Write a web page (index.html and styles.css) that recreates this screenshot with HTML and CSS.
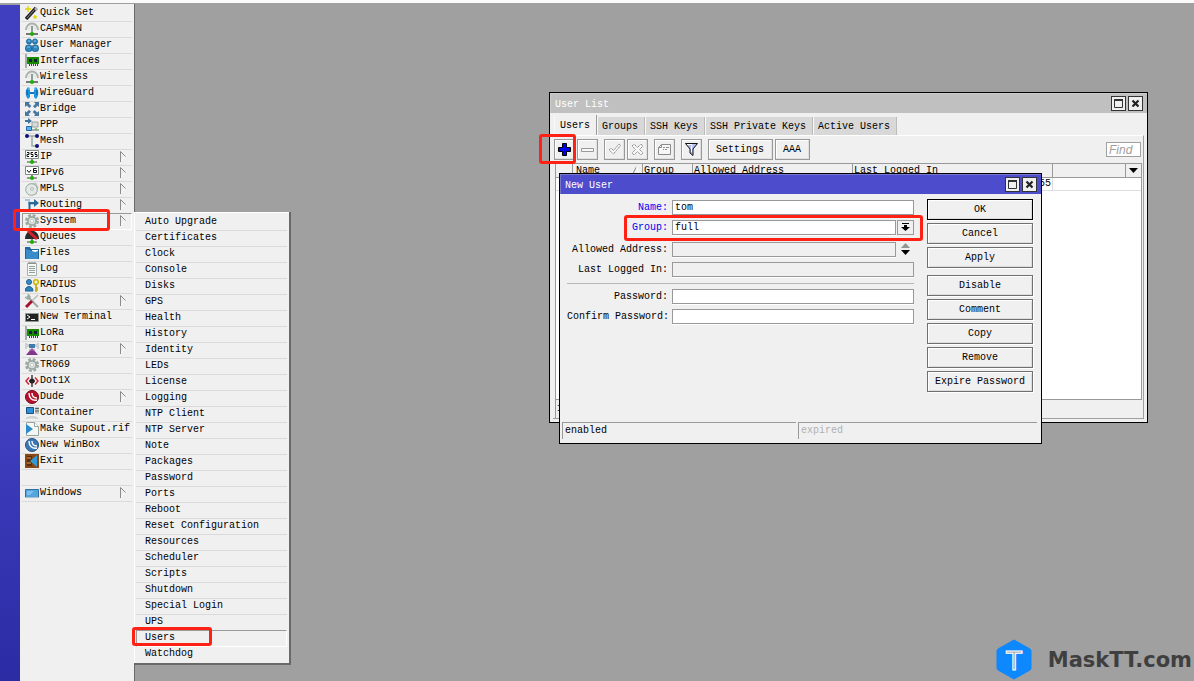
FILE: index.html
```html
<!DOCTYPE html>
<html lang="en">
<head>
<meta charset="utf-8">
<title>WinBox</title>
<link rel="stylesheet" href="styles.css">
</head>
<body>
<svg class="defs" aria-hidden="true">
  <symbol id="antenna" viewBox="0 0 14 14"><path d="M1 8a6 6.500 0 0 1 12 0" fill="none" stroke="#a9b4af" stroke-width="2"/><path d="M3.500 8a3.500 4 0 0 1 7 0" fill="none" stroke="#dde3e0"/><path d="M7 4v7" stroke="#8d9c95" stroke-width="2"/><path d="M1 12h12" stroke="#444" stroke-width="1.4"/><circle cx="7" cy="12" r="2" fill="#19b000"/></symbol>
  <symbol id="card" viewBox="0 0 14 14"><path d="M1 0v14" stroke="#a3b0aa" stroke-width="2"/><path d="M2 3h12v7H2z" fill="#178a00"/><path d="M4 5h3v3H4zM9 5h3v3H9z" fill="#123"/><path d="M4.500 10v2M6.500 10v2M8.500 10v2M10.500 10v2M12.500 10v2" stroke="#0c6500"/></symbol>
  <symbol id="gear" viewBox="0 0 14 14"><circle cx="7" cy="7" r="5.800" fill="none" stroke="#9aa7a2" stroke-width="2.400" stroke-dasharray="2.800 1.755"/><circle cx="7" cy="7" r="4.200" fill="#dfe5e2" stroke="#9aa7a2" stroke-width="1.800"/><circle cx="7" cy="7" r="1.900" fill="#f5f5f5" stroke="#c0c9c5"/></symbol>
  <symbol id="plug" viewBox="0 0 14 14"><path d="M.5.500h13v8H.500z" fill="#fff" stroke="#7d8c86"/><path d="M7 9v3M2 12h10" stroke="#444" stroke-width="1.2"/><circle cx="7" cy="12" r="2" fill="#19b000"/></symbol>
  <symbol id="arrow" viewBox="0 0 6 11"><path d="M5.500 5.500L.500 10.500" fill="none" stroke="#fff"/><path d="M.500 11V.500L5.500 5.500" fill="none" stroke="#8b8b8b"/></symbol>
  <symbol id="max" viewBox="0 0 15 15"><path d="M3.500 3.500h8v8h-8z" fill="none" stroke="#333"/><path d="M3 4h9" stroke="#333" stroke-width="2"/></symbol>
  <symbol id="close" viewBox="0 0 15 15"><path d="M4.500 4.500l6 6M10.500 4.500l-6 6" stroke="#222" stroke-width="2.200"/></symbol>
</svg>
<div class="topbar"></div>
<div class="app">
  <div class="rail"></div>
  <nav class="menu" aria-label="Main menu">
    <ul class="list">
      <li><a href="#"><svg class="ico" viewBox="0 0 14 14"><path d="M1 13L11 2" stroke="#222" stroke-width="3.500"/><path d="M9 3l2-2 2 2-2 2z" fill="#aaa"/><path d="M2 12l7-8" stroke="#888"/><path d="M3 0v6M0 3h6M10 9v4M8 11h4" stroke="#e3d400" stroke-width="1.400"/></svg>Quick Set</a></li>
      <li><a href="#"><svg class="ico"><use href="#antenna"/></svg>CAPsMAN</a></li>
      <li><a href="#"><svg class="ico" viewBox="0 0 14 14"><g fill="#2e86be" stroke="#1d5f8d" stroke-width=".8"><circle cx="4" cy="3.500" r="2.600"/><circle cx="10" cy="3.500" r="2.600"/><rect x=".5" y="7" width="6.500" height="6.500" rx="2.500"/><rect x="7" y="7" width="6.500" height="6.500" rx="2.500"/></g><path d="M2 9h3M9 9h3M3 3h2M9 3h2" stroke="#7fc3ea"/></svg>User Manager</a></li>
      <li><a href="#"><svg class="ico"><use href="#card"/></svg>Interfaces</a></li>
      <li><a href="#"><svg class="ico"><use href="#antenna"/></svg>Wireless</a></li>
      <li><a href="#"><svg class="ico" viewBox="0 0 14 14"><path d="M3 1C0 4 0 10 3 13l2-2V8h4v3l2 2c3-3 3-9 0-12L9 3v3H5V3z" fill="#1b93dd"/><path d="M2 4v5M12 4v5M5 7h4" stroke="#0b5ba0"/><path d="M4 1v3M10 1v3" stroke="#7dcaf5"/></svg>WireGuard</a></li>
      <li><a href="#"><svg class="ico" viewBox="0 0 14 14"><path d="M0 0h5L3.800 1.500l2.500 2.500-2 2-2.500-2.500L0 5zM14 0v5l-1.500-1.200-2.500 2.500-2-2 2.500-2.500L9 0zM0 14V9l1.500 1.200L4 7.700l2 2-2.500 2.500L5 14zM14 14H9l1.200-1.500-2.500-2.500 2-2 2.500 2.500L14 9z" fill="#47779f"/></svg>Bridge</a></li>
      <li><a href="#"><svg class="ico" viewBox="0 0 14 14"><path d="M0 2h3V0l4 3-4 3V4H0z" fill="#3f729b"/><path d="M7 4h6v5H7z" fill="#d7dcda" stroke="#9aa39f"/><path d="M7 11h7v2H7z" fill="#a7b0ac"/><path d="M1.500 8.500h5v4h-5z" fill="#56b2ed" stroke="#246b9f"/><path d="M10 11h2" stroke="#19b000"/></svg>PPP</a></li>
      <li><a href="#"><svg class="ico" viewBox="0 0 14 14"><path d="M2 2h10M7 2v10h5" fill="none" stroke="#9aa8a2" stroke-width="1.500"/><g fill="#101078"><circle cx="2" cy="2" r="2"/><circle cx="12" cy="2" r="2"/><circle cx="12" cy="12" r="2"/></g></svg>Mesh</a></li>
      <li><a href="#"><svg class="ico" viewBox="0 0 14 14"><use href="#plug"/><path d="M2 2.500h2v2H2v2h2M8 2.500H6v2h2v2H6M12 2.500h-2v2h2v2h-2" fill="none" stroke="#111"/></svg>IP<svg class="more"><use href="#arrow"/></svg></a></li>
      <li><a href="#"><svg class="ico" viewBox="0 0 14 14"><use href="#plug"/><path d="M2 4l2 2.500L6 4M11.500 2.500H8.500v4h3v-2h-3" fill="none" stroke="#111"/></svg>IPv6<svg class="more"><use href="#arrow"/></svg></a></li>
      <li><a href="#"><svg class="ico" viewBox="0 0 14 14"><path d="M3 2l8-1.500 2.500 5-2 7-6 1z" fill="#bcc5c1"/><circle cx="6.500" cy="7.500" r="5.800" fill="#e4e9e7" stroke="#9ca8a3"/><circle cx="7" cy="7" r="1.400" fill="#fff" stroke="#aab5b0"/></svg>MPLS<svg class="more"><use href="#arrow"/></svg></a></li>
      <li><a href="#"><svg class="ico" viewBox="0 0 14 14"><path d="M0 2h4v4h5" fill="none" stroke="#a9c7dd" stroke-width="2"/><path d="M4.500 13V5h6" fill="none" stroke="#2d6796" stroke-width="2"/><path d="M9 1l5 4-5 4zM0 11h2v2H0z" fill="#2d6796"/></svg>Routing<svg class="more"><use href="#arrow"/></svg></a></li>
      <li class="open"><a href="#"><svg class="ico"><use href="#gear"/></svg>System<svg class="more"><use href="#arrow"/></svg></a>
        <span class="mark mark-system"></span>
        <ul class="list submenu">
          <li><a href="#">Auto Upgrade</a></li>
          <li><a href="#">Certificates</a></li>
          <li><a href="#">Clock</a></li>
          <li><a href="#">Console</a></li>
          <li><a href="#">Disks</a></li>
          <li><a href="#">GPS</a></li>
          <li><a href="#">Health</a></li>
          <li><a href="#">History</a></li>
          <li><a href="#">Identity</a></li>
          <li><a href="#">LEDs</a></li>
          <li><a href="#">License</a></li>
          <li><a href="#">Logging</a></li>
          <li><a href="#">NTP Client</a></li>
          <li><a href="#">NTP Server</a></li>
          <li><a href="#">Note</a></li>
          <li><a href="#">Packages</a></li>
          <li><a href="#">Password</a></li>
          <li><a href="#">Ports</a></li>
          <li><a href="#">Reboot</a></li>
          <li><a href="#">Reset Configuration</a></li>
          <li><a href="#">Resources</a></li>
          <li><a href="#">Scheduler</a></li>
          <li><a href="#">Scripts</a></li>
          <li><a href="#">Shutdown</a></li>
          <li><a href="#">Special Login</a></li>
          <li><a href="#">UPS</a></li>
          <li class="open"><a href="#">Users</a><span class="mark mark-users"></span></li>
          <li><a href="#">Watchdog</a></li>
        </ul>
      </li>
      <li><a href="#"><svg class="ico" viewBox="0 0 14 14"><path d="M0 9C0-2 14-2 14 9z" fill="#2a2a2a"/><path d="M3 1l9 8" stroke="#d3202a" stroke-width="3"/><path d="M7 9v3M2 12h10" stroke="#444" stroke-width="1.200"/><circle cx="7" cy="12" r="2" fill="#19b000"/></svg>Queues</a></li>
      <li><a href="#"><svg class="ico" viewBox="0 0 14 14"><path d="M0 1h5l1 2h8v10H0z" fill="#1f679c"/><path d="M7 4h6v3H7z" fill="#fff"/><path d="M1 3l9 3 3-1v8H1z" fill="#3a8cc9"/></svg>Files</a></li>
      <li><a href="#"><svg class="ico" viewBox="0 0 14 14"><path d="M2.500 1.500h9v12h-9z" fill="#f8faf9" stroke="#a5b0ac"/><path d="M4 4.500h6M4 6.500h6M4 8.500h6M4 10.500h6" stroke="#8fa09a"/><path d="M4 0v2M6 0v2M8 0v2M10 0v2" stroke="#777"/></svg>Log</a></li>
      <li><a href="#"><svg class="ico" viewBox="0 0 14 14"><circle cx="4" cy="4" r="2.500" fill="#3a8cc9" stroke="#1f5f90"/><path d="M0 13c0-6 8-6 8 0z" fill="#2f83bf" stroke="#1f5f90"/><circle cx="11" cy="4" r="2.300" fill="none" stroke="#d2b900" stroke-width="1.600"/><path d="M11 6v8M11 10h2M11 12h2" stroke="#c2aa00" stroke-width="1.600"/></svg>RADIUS</a></li>
      <li><a href="#"><svg class="ico" viewBox="0 0 14 14"><path d="M2 2l11 11" stroke="#9aa8a2" stroke-width="2"/><path d="M0 3l3 2 2-2-2-3" fill="none" stroke="#9aa8a2" stroke-width="1.500"/><path d="M13 1L7 7" stroke="#b7c1bd" stroke-width="1.600"/><path d="M7 7l-6 6" stroke="#a50f2b" stroke-width="3"/></svg>Tools<svg class="more"><use href="#arrow"/></svg></a></li>
      <li><a href="#"><svg class="ico" viewBox="0 0 14 14"><path d="M.500 3.500h13v8H.500z" fill="#222" stroke="#8a9792"/><path d="M2 5l3 2-3 2M6 9.500h4" fill="none" stroke="#fff"/></svg>New Terminal</a></li>
      <li><a href="#"><svg class="ico"><use href="#card"/></svg>LoRa</a></li>
      <li><a href="#"><svg class="ico" viewBox="0 0 14 14"><path d="M4 2h6v4H4z" fill="#3f7cab"/><path d="M1 1v6M13 1v6M3 2v3M11 2v3" stroke="#9fb0bb"/><path d="M7 6l6 7H1z" fill="#80368c"/><path d="M4 8h6" stroke="#b77bc0"/></svg>IoT<svg class="more"><use href="#arrow"/></svg></a></li>
      <li><a href="#"><svg class="ico"><use href="#gear"/></svg>TR069</a></li>
      <li><a href="#"><svg class="ico" viewBox="0 0 14 14"><path d="M4 3.500L1 7l3 3.500M10 3.500L13 7l-3 3.500" fill="none" stroke="#c92b3c" stroke-width="1.500"/><path d="M7 1v12M4 7h6" stroke="#222" stroke-width="1.300"/><circle cx="7" cy="7" r="2.500" fill="#222"/></svg>Dot1X</a></li>
      <li><a href="#"><svg class="ico" viewBox="0 0 14 14"><circle cx="7" cy="7" r="6.500" fill="#b7122b" stroke="#790a1c"/><path d="M4 3c0 5 3 8 8 7M7 3c0 3 2 5 5 5" fill="none" stroke="#fff" stroke-width="1.400"/></svg>Dude<svg class="more"><use href="#arrow"/></svg></a></li>
      <li><a href="#"><svg class="ico" viewBox="0 0 14 14"><path d="M1.500 1.500h7v6h-7z" fill="#2f8ed8" stroke="#194f80"/><path d="M10 1h4v7h-4z" fill="#bac3bf"/><path d="M10 2.500h4M10 5h4" stroke="#55635d"/><path d="M1 13c1-3 11-3 12 0" fill="#ddd" stroke="#bfc6c3"/></svg>Container</a></li>
      <li><a href="#"><svg class="ico" viewBox="0 0 14 14"><path d="M1.500.500h8l4 4v9h-12z" fill="#f4f7f6" stroke="#98a5a0"/><path d="M9.500.500v4h4" fill="#fff" stroke="#98a5a0"/><path d="M1 2l7 5-7 5z" fill="#2c8cc8"/></svg>Make Supout.rif</a></li>
      <li><a href="#"><svg class="ico" viewBox="0 0 14 14"><circle cx="7" cy="7" r="6.500" fill="#3a79b5" stroke="#28517d"/><path d="M4 3c0 5 3 8 8 7M7 3c0 3 2 5 5 5" fill="none" stroke="#fff" stroke-width="1.400"/></svg>New WinBox</a></li>
      <li><a href="#"><svg class="ico" viewBox="0 0 14 14"><path d="M0 0h14v14H0z" fill="#8a4714"/><path d="M2 2h5v10H2z" fill="#5d2c08"/><path d="M2 4h4M2 9h4" stroke="#e0a060"/><path d="M12 1v12L5 7z" fill="#2f9ad8"/></svg>Exit</a></li>
      <li class="blank"></li>
      <li><a href="#"><svg class="ico" viewBox="0 0 14 14"><path d="M.500 3.500h13v8H.500z" fill="#55a5dd" stroke="#2a6fa5"/><path d="M0 11.500h14" stroke="#aebfca"/><path d="M2 5h7L5 9H2z" fill="#7dbfed"/></svg>Windows<svg class="more"><use href="#arrow"/></svg></a></li>
    </ul>
  </nav>
  <main class="desk">
    <section class="window user-list" aria-label="User List">
      <header class="title"><h2>User List</h2><button class="wbtn" aria-label="Maximize"><svg><use href="#max"/></svg></button><button class="wbtn" aria-label="Close"><svg><use href="#close"/></svg></button></header>
      <div class="tabs" role="tablist">
        <button role="tab" class="tab active" aria-selected="true">Users</button>
        <button role="tab" class="tab">Groups</button>
        <button role="tab" class="tab">SSH Keys</button>
        <button role="tab" class="tab">SSH Private Keys</button>
        <button role="tab" class="tab">Active Users</button>
      </div>
      <div class="panel">
        <div class="toolbar">
          <div class="group">
            <button class="tool" aria-label="Add"><svg viewBox="0 0 13 13"><path d="M4.500.500h4v4h4v4h-4v4h-4v-4h-4v-4h4z" fill="#0000f0" stroke="#000"/></svg><span class="mark mark-add"></span></button>
            <button class="tool" aria-label="Remove"><svg viewBox="0 0 13 13"><path d="M.500 5.500h12v3H.500z" fill="#f7f7f7" stroke="#999"/></svg></button>
          </div>
          <div class="group">
            <button class="tool" aria-label="Enable"><svg viewBox="0 0 13 13"><path d="M1 7l2-2 2.500 2.500L11 1l1.500 1.500L5.500 11z" fill="#f7f7f7" stroke="#8c8c8c" stroke-dasharray="1.500 .6"/></svg></button>
            <button class="tool" aria-label="Disable"><svg viewBox="0 0 13 13"><path d="M1 3l2-2 3.500 3.500L10 1l2 2-3.500 3.500L12 10l-2 2-3.500-3.500L3 12l-2-2 3.500-3.500z" fill="#f7f7f7" stroke="#8c8c8c" stroke-dasharray="1.500 .6"/></svg></button>
          </div>
          <div class="group">
            <button class="tool" aria-label="Comment"><svg viewBox="0 0 13 13"><path d="M3.500 1.500h9v10H.500v-7zM3.500 1.500v3h-3" fill="#f7f7f7" stroke="#8a8a8a"/><path d="M5 4.500h2M8 4.500h3M5 6.500h1M7 6.500h2" stroke="#8a8a8a"/></svg></button>
          </div>
          <div class="group">
            <button class="tool" aria-label="Filter"><svg viewBox="0 0 13 13"><path d="M.500.500h12L8 6v6.500L5 10V6z" fill="#b5bdf0" stroke="#111"/><path d="M2 1.500h5L6.500 5v4" fill="none" stroke="#fff"/></svg></button>
          </div>
          <div class="group">
            <button class="tool text">Settings</button>
            <button class="tool text">AAA</button>
          </div>
          <input class="find" type="text" placeholder="Find" aria-label="Find">
        </div>
        <div class="grid">
          <table>
            <colgroup><col class="c-flag"><col class="c-name"><col class="c-group"><col class="c-addr"><col class="c-last"><col><col class="c-menu"></colgroup>
            <thead><tr><th></th><th><span class="sort">Name<svg viewBox="0 0 7 9"><path d="M.500 8.500l4-8" stroke="#888"/><path d="M4.500.500l2 8H.500" fill="none" stroke="#fff"/></svg></span></th><th>Group</th><th>Allowed Address</th><th>Last Logged In</th><th></th><th class="pick"><svg viewBox="0 0 9 5"><path d="M0 0h9L4.500 5z"/></svg></th></tr></thead>
            <tbody><tr><td></td><td></td><td></td><td></td><td class="time">55</td><td></td><td></td></tr></tbody>
          </table>
        </div>
        <div class="count">1</div>
      </div>
    </section>

    <section class="window new-user" role="dialog" aria-label="New User">
      <header class="title"><h2>New User</h2><button class="wbtn" aria-label="Maximize"><svg><use href="#max"/></svg></button><button class="wbtn" aria-label="Close"><svg><use href="#close"/></svg></button></header>
      <div class="content">
        <form class="form">
          <div class="row"><label class="changed" for="name">Name:</label><input id="name" type="text" value="tom"></div>
          <div class="row"><label class="changed" for="group">Group:</label><select id="group"><option>full</option><option>read</option><option>write</option></select><button type="button" class="drop" aria-label="Show groups"><svg viewBox="0 0 9 9"><path d="M1 0h7v1H1zM3 2h3v2h3L4.500 8 0 4h3z"/></svg></button><span class="mark mark-group"></span></div>
          <div class="row apart"><label for="addr">Allowed Address:</label><input id="addr" class="unset" type="text"><button type="button" class="spin" aria-label="Add or remove address"><svg viewBox="0 0 9 13"><path d="M4.500 0L9 5H0z" fill="#8d968f"/><path d="M0 7h9l-4.500 5z"/></svg></button></div>
          <div class="row"><label for="last">Last Logged In:</label><input id="last" class="unset" type="text" readonly></div>
          <hr>
          <div class="row"><label for="pw">Password:</label><input id="pw" type="password"></div>
          <div class="row"><label for="pw2">Confirm Password:</label><input id="pw2" type="password"></div>
        </form>
        <div class="actions">
          <button class="act main">OK</button>
          <button class="act">Cancel</button>
          <button class="act">Apply</button>
          <button class="act second">Disable</button>
          <button class="act">Comment</button>
          <button class="act">Copy</button>
          <button class="act">Remove</button>
          <button class="act">Expire Password</button>
        </div>
      </div>
      <footer class="status"><span class="on">enabled</span><span class="off">expired</span></footer>
    </section>

    <div class="brand">
      <svg viewBox="0 0 36 41"><path d="M18 1l16 9q1 .5 1 2v17q0 1.500-1 2l-16 9-16-9q-1-.5-1-2V12q0-1.500 1-2z" fill="#0d88ff" stroke="#0d88ff"/><text x="18" y="31" text-anchor="middle" class="brand-t">T</text></svg>
      <span>MaskTT.com</span>
    </div>
  </main>
</div>
</body>
</html>
```

FILE: styles.css
```css
* { box-sizing: border-box; }

body {
  margin: 0;
  min-height: 100vh;
  display: flex;
  flex-direction: column;
  overflow: hidden;
  background: #a0a0a0;
  color: #000;
  font: 10px/13px "Liberation Mono", monospace;
}

button, input, select {
  margin: 0;
  padding: 0;
  border: 0;
  border-radius: 0;
  font: inherit;
  color: inherit;
  background: #f0f0f0;
}

svg { display: block; }
a { color: inherit; text-decoration: none; }
.defs { position: absolute; width: 0; height: 0; }

.topbar { height: 4px; background: #fafafa; border-bottom: 1px solid #a0a0a0; }
.app { flex: 1; display: flex; height: calc(100vh - 4px); }
.rail { width: 20px; margin-top: 1px; background: linear-gradient(#3f3fc0 60%, #2b2ba4); }

/* menus */
.menu {
  width: 115px;
  padding: 2px 2px 0;
  background: #f0f0f0;
  border-right: 1px solid #696969;
}
.list { margin: 0; padding: 0; list-style: none; }
.list li { position: relative; height: 16px; border-bottom: 1px solid #dadada; }
.list a { display: flex; padding-left: 3px; gap: 1px; white-space: nowrap; }
.ico { width: 14px; height: 14px; flex: none; }
.more { width: 6px; height: 11px; margin: 1px 6px 0 auto; }
.list .open::before {
  content: "";
  position: absolute;
  inset: -1px 0;
  border: 1px solid #fff;
  border-top-color: #999;
  border-left-color: #999;
  pointer-events: none;
}

.submenu {
  position: absolute;
  z-index: 1;
  left: 112px;
  top: -2px;
  width: 157px;
  padding: 3px 2px 0;
  background: #f0f0f0;
  border: 1px solid #696969;
  border-width: 0 2px 2px 0;
  box-shadow: inset 1px 1px #fff;
}
.submenu a { padding-left: 9px; }
.submenu li:last-child { border: 0; }

.mark {
  position: absolute;
  z-index: 2;
  border: 3px solid #ff2114;
  border-radius: 3px;
  pointer-events: none;
}
.mark-system { inset: -5px 22px -2px -9px; }
.mark-users { inset: -4px 75px 0 -4px; }
.mark-add { inset: -6px -2px -5px -16px; }
.mark-group { inset: -5px -9px -6px 57px; }

/* windows */
.desk { position: relative; flex: 1; }
.window {
  position: absolute;
  display: flex;
  flex-direction: column;
  background: #f0f0f0;
  border: 1px solid #000;
}
.user-list { left: 414px; top: 88px; width: 599px; height: 331px; }
.new-user { left: 424px; top: 169px; width: 483px; height: 271px; }
.title {
  display: flex;
  align-items: center;
  gap: 2px;
  height: 20px;
  padding: 0 4px 0 5px;
  background: #c0c0c0;
  color: #fff;
  box-shadow: inset 1px 1px #ccc;
}
.new-user .title { background: #4c4ccc; box-shadow: inset 1px 1px #7777cc; }
.title h2 { flex: 1; margin: 2px 0 0; font: inherit; }
.wbtn { width: 15px; height: 15px; border: 1px solid #333; }
.wbtn svg { width: 15px; height: 15px; margin: -1px; }

.tabs { display: flex; align-items: flex-end; height: 22px; padding-left: 4px; }
.tab {
  height: 18px;
  padding: 1px 6px 0 4px;
  background: #d8d8d8;
  border-left: 1px solid #f8f8f8;
  border-right: 1px solid #bbb;
}
.tab.active { height: 20px; padding: 0 6px 0 5px; background: #f0f0f0; border-right-color: #999; }
.panel {
  flex: 1;
  display: flex;
  flex-direction: column;
  margin: 0 3px 3px 3px;
  padding: 3px 1px 0 1px;
  border: 1px solid #a0a0a0;
  border-top-color: #fff;
  border-left-width: 0;
}
.toolbar { display: flex; gap: 6px; margin: 0 1px 3px 0; }
.group { display: flex; gap: 2px; }
.tool {
  position: relative;
  display: flex;
  align-items: center;
  justify-content: center;
  width: 21px;
  height: 21px;
  border: 1px solid #999;
  box-shadow: inset -1px -1px #e0e0e0, inset 1px 1px #fff;
}
.tool.text { width: auto; padding: 0 8px 0 7px; }
.tool svg { width: 13px; height: 13px; }
.find {
  width: 35px;
  height: 15px;
  margin: 3px 0 0 auto;
  padding: 0 2px;
  background: #fff;
  border: 1px solid #a0a0a0;
  font: italic 12px/13px "Liberation Sans", sans-serif;
}
.find::placeholder { color: #a0a0a0; opacity: 1; }
.grid { flex: 1; margin-left: 1px; background: #fff; border: 1px solid #999; }
table { width: 100%; table-layout: fixed; border-collapse: separate; border-spacing: 0; }
th, td { padding: 0 1px; text-align: left; font-weight: normal; white-space: nowrap; }
th { height: 14px; background: #f0f0f0; border-right: 1px solid #999; border-bottom: 1px solid #999; }
td { height: 13px; line-height: 12px; border-bottom: 1px solid #ddd; }
th:last-child { border-right: 0; }
.time { text-align: right; border-right: 1px solid #ddd; }
.c-flag { width: 17px; }
.c-name { width: 70px; }
.c-group { width: 50px; }
.c-addr { width: 160px; }
.c-last { width: 200px; }
.c-menu { width: 15px; }
.sort { display: flex; justify-content: space-between; align-items: center; padding: 0 2px; }
.sort svg { width: 7px; height: 9px; }
.pick svg { width: 9px; height: 5px; margin: auto; }
.count { height: 18px; padding: 2px 1px; margin-left: 1px; border-left: 1px solid #999; }

/* new user dialog */
.content { flex: 1; display: flex; gap: 13px; padding: 5px 8px 0 7px; }
.form { flex: 1; padding-top: 1px; }
.row { position: relative; display: flex; gap: 1px; height: 15px; margin-bottom: 5px; }
.row label { width: 101px; margin-right: 3px; line-height: 16px; text-align: right; white-space: nowrap; }
.row .changed { color: #0000f0; }
.row input, .row select {
  flex: 1;
  min-width: 0;
  height: 15px;
  padding: 0 2px;
  appearance: none;
  background: #fff;
  border: 1px solid #999;
  box-shadow: 0 1px #fff;
}
.row .unset { background: #f0f0f0; }
.row.apart { margin-top: 7px; }
.drop, .spin { display: flex; align-items: center; justify-content: center; width: 17px; }
.drop { border: 1px solid #999; }
.drop svg { width: 9px; height: 9px; }
.spin svg { width: 9px; height: 13px; }
hr { height: 1px; margin: 6px 0 5px; border: 0; background: #b5b9b5; }

.actions { display: flex; flex-direction: column; gap: 3px; width: 106px; }
.act {
  height: 21px;
  border: 1px solid #707070;
  box-shadow: inset 1px 1px #fff, inset -1px -1px #ddd, 1px 1px #fff;
}
.act.main { border-color: #000; }
.act.second { margin-top: 4px; }
.status { display: flex; gap: 2px; padding: 0 4px 4px 2px; }
.status span {
  height: 17px;
  padding: 1px 2px;
  border-top: 1px solid #999;
  border-left: 1px solid #999;
}
.status .on { width: 234px; }
.status .off { flex: 1; color: #b0b0b0; }

.brand {
  position: absolute;
  right: 2px;
  bottom: 1px;
  display: flex;
  align-items: center;
  gap: 16px;
  color: #3f3f3f;
  font: bold 21px/24px "DejaVu Sans", sans-serif;
}
.brand svg { width: 36px; height: 41px; }
.brand-t { font: 28px "Liberation Sans", sans-serif; fill: #aaa; stroke: #fff; stroke-width: 1px; }
```
